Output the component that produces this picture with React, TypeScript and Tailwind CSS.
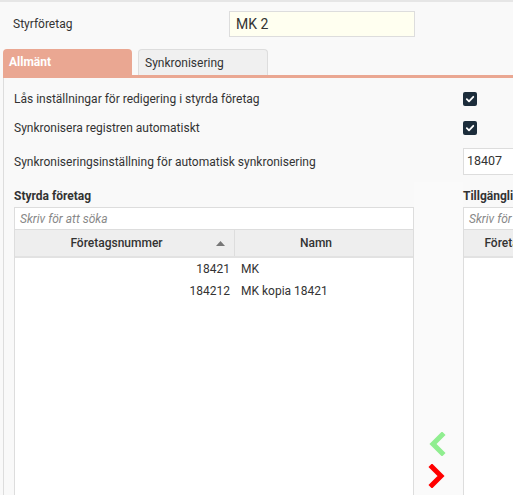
import React from "react";

function Check() {
  return (
    <div className="w-[14px] h-[14px] shrink-0 rounded-[2px] bg-[#1c2d3b] flex items-center justify-center">
      <svg width="10" height="10" viewBox="0 0 10 10">
        <path d="M1.8 5.2 L4 7.3 L8.3 2.8" stroke="white" strokeWidth="1.8" fill="none" strokeLinecap="round" strokeLinejoin="round" />
      </svg>
    </div>
  );
}

function ListPanel({ title, rows, narrow }: { title: string; rows: [string, string][]; narrow?: boolean }) {
  return (
    <div className="w-[400px] shrink-0 flex flex-col">
      <div className="h-[25px] flex items-center font-bold text-[#333] pt-[3px] whitespace-nowrap">{title}</div>
      <div className="h-[23px] border border-[#ddd] bg-white flex items-center pl-[5px] italic text-[#888] whitespace-nowrap">Skriv för att söka</div>
      <div className="flex-1 border-x border-[#ddd] bg-white flex flex-col">
        <div className="flex h-[28px] bg-[#eeeeee] border-b-2 border-[#e2e2e2] font-medium text-[#333]">
          <div className={(narrow ? "w-[150px]" : "w-[220px]") + " shrink-0 flex items-center justify-center pr-[16px] relative border-r border-[#dddddd] whitespace-nowrap"}>
            <span>Företagsnummer</span>
            {!narrow && (
              <svg className="absolute right-[9px] top-[11px]" width="9" height="5" viewBox="0 0 9 5">
                <path d="M0 5 L4.5 0 L9 5 Z" fill="#777" />
              </svg>
            )}
          </div>
          <div className="flex-1 flex items-center justify-center pr-[16px]">Namn</div>
        </div>
        <div>
          {rows.map(([n, name]) => (
            <div key={n} className="flex h-[22px] items-center">
              <div className="w-[215px] text-right">{n}</div>
              <div className="pl-[11px]">{name}</div>
            </div>
          ))}
        </div>
      </div>
    </div>
  );
}

export default function App() {
  return (
    <div
      className="w-[513px] h-[495px] overflow-hidden bg-[#f9f9f9] border-t-2 border-[#e6e6e6] text-[12px] text-[#333] flex flex-col"
      style={{ fontFamily: "Roboto, 'Liberation Sans', sans-serif" }}
    >
      <div className="flex items-center pt-[9px] shrink-0">
        <div className="w-[229px] shrink-0 pl-[13px]">Styrföretag</div>
        <div className="w-[186px] shrink-0 h-[26px] border border-[#dddddd] bg-[#fffff0] flex items-center pl-[6px] text-[14px] text-[#333]">MK 2</div>
      </div>
      <div className="ml-[3px] mt-[12px] flex gap-[6px] items-end shrink-0">
        <div className="w-[129px] h-[26px] rounded-t-[4px] bg-[#eaa792] text-white font-bold flex items-center pl-[6px]">Allmänt</div>
        <div className="w-[130px] h-[26px] rounded-t-[4px] bg-[#f0f0f0] border border-b-0 border-[#dddddd] flex items-center pl-[6px]">Synkronisering</div>
      </div>
      <div className="ml-[3px] h-[3px] bg-[#eaa792] shrink-0" />
      <div className="ml-[3px] flex-1 border-l border-[#dddddd] pl-[10px] flex flex-col min-h-0">
        <div className="flex items-center h-[29px] mt-[6px]">
          <div className="w-[449px] shrink-0">Lås inställningar för redigering i styrda företag</div>
          <Check />
        </div>
        <div className="flex items-center h-[29px]">
          <div className="w-[449px] shrink-0">Synkronisera registren automatiskt</div>
          <Check />
        </div>
        <div className="flex items-center h-[27px] mt-[6px]">
          <div className="w-[449px] shrink-0">Synkroniseringsinställning för automatisk synkronisering</div>
          <div className="w-[80px] h-[27px] border border-[#dddddd] bg-white flex items-center pl-[3px] shrink-0 text-[12.5px]">18407</div>
        </div>
        <div className="flex flex-1 mt-[7px] min-h-0">
          <ListPanel title="Styrda företag" rows={[["18421", "MK"], ["184212", "MK kopia 18421"]]} />
          <div className="w-[49px] shrink-0 bg-[#fafafa] flex flex-col items-center justify-end pb-[7px] gap-[8px] pr-[3px]">
            <svg width="18" height="24" viewBox="0 0 18 24">
              <path d="M14 3 L5 12 L14 21" stroke="#90ee90" strokeWidth="5" fill="none" strokeLinecap="square" strokeLinejoin="miter" />
            </svg>
            <svg width="18" height="24" viewBox="0 0 18 24">
              <path d="M4 3 L13 12 L4 21" stroke="#ff0000" strokeWidth="5" fill="none" strokeLinecap="square" strokeLinejoin="miter" />
            </svg>
          </div>
          <ListPanel title="Tillgängliga företag" rows={[]} narrow />
        </div>
      </div>
    </div>
  );
}
